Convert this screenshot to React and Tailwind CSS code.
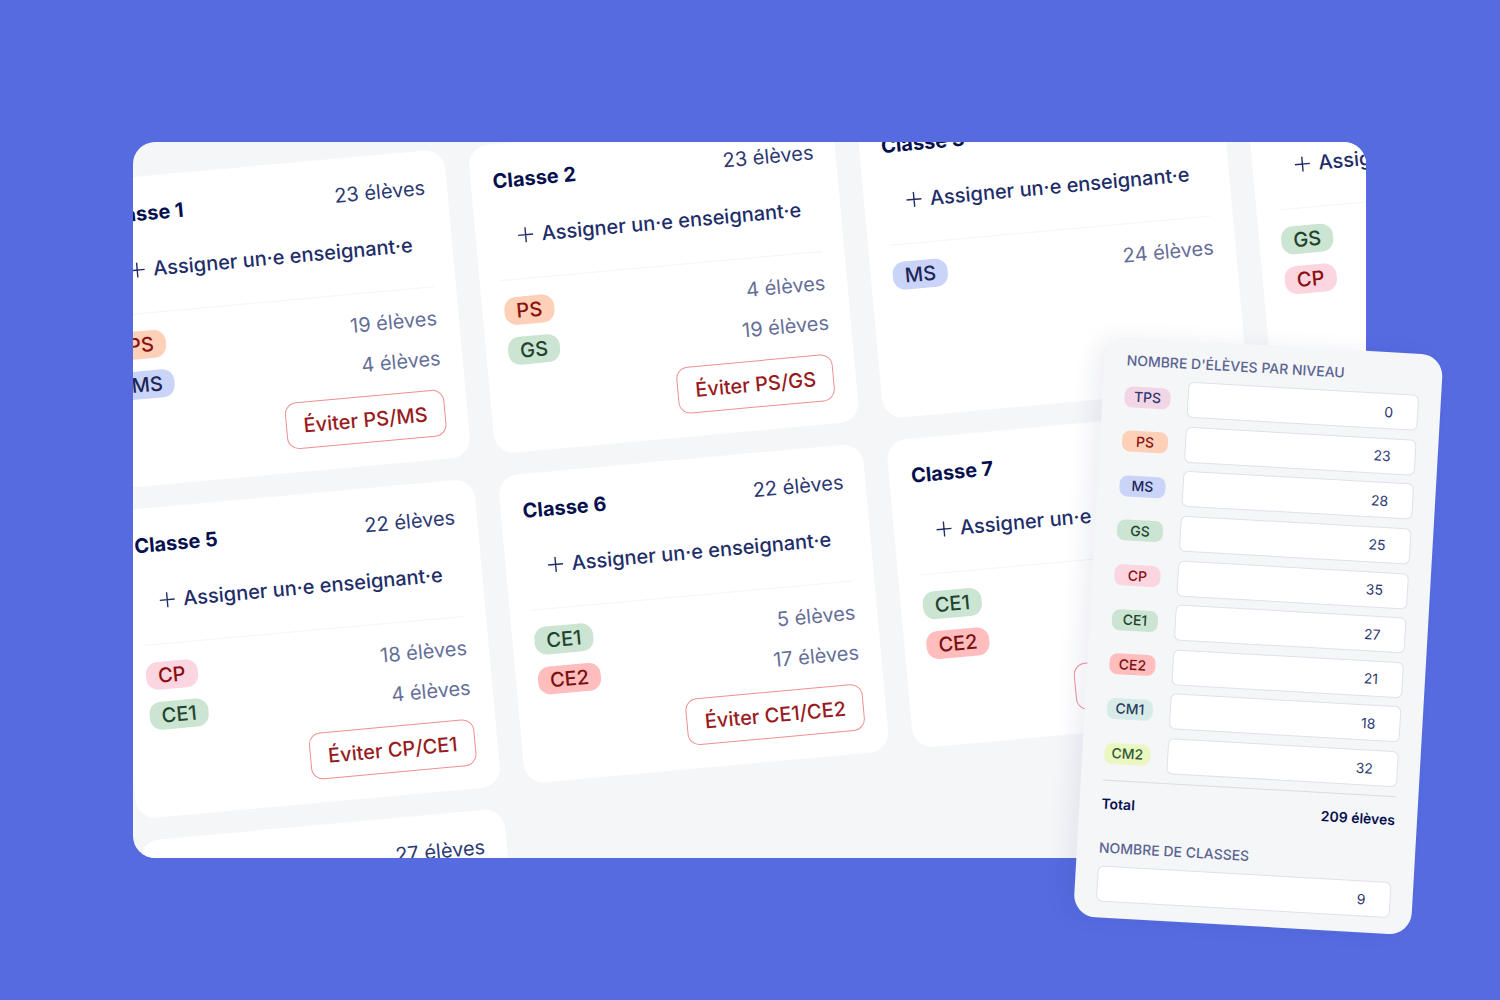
import React from "react";

const TAG_COLORS = {
  TPS: "bg-[#f3d6e6] text-[#2f3a72]",
  PS: "bg-[#ffd0b8] text-[#8b1010]",
  MS: "bg-[#cad4f9] text-[#1d2656]",
  GS: "bg-[#cbe5d2] text-[#22442f]",
  CP: "bg-[#fbd5e0] text-[#8b0d0d]",
  CE1: "bg-[#cbe5d2] text-[#22442f]",
  CE2: "bg-[#ffbdbd] text-[#7a0f0f]",
  CM1: "bg-[#d7ebe8] text-[#2b3d5c]",
  CM2: "bg-[#ebf7c0] text-[#2f5a3a]",
};

const CLASSES = [
  { id: 1, total: 23, levels: [["PS", 19], ["MS", 4]] },
  { id: 2, total: 23, levels: [["PS", 4], ["GS", 19]] },
  { id: 3, total: 24, levels: [["MS", 24]] },
  { id: 4, total: 23, levels: [["GS", 6], ["CP", 17]] },
  { id: 5, total: 22, levels: [["CP", 18], ["CE1", 4]] },
  { id: 6, total: 22, levels: [["CE1", 5], ["CE2", 17]] },
  { id: 7, total: 22, levels: [["CE1", 18], ["CE2", 4]] },
  { id: 8, total: 23, levels: [["CM1", 18], ["CM2", 5]] },
  { id: 9, total: 27, levels: [["CM2", 27]] },
];

const LEVELS = [
  ["TPS", 0],
  ["PS", 23],
  ["MS", 28],
  ["GS", 25],
  ["CP", 35],
  ["CE1", 27],
  ["CE2", 21],
  ["CM1", 18],
  ["CM2", 32],
];

function ClassCard({ id, total, levels }) {
  return (
    <article className="h-[309px] rounded-[20px] bg-white px-[22px] pt-[25px] text-[20px] leading-6">
      <header className="flex items-baseline justify-between">
        <h2 className="font-bold text-[#06104e]">Classe {id}</h2>
        <span className="text-[#2c3872]">{total} élèves</span>
      </header>
      <button
        type="button"
        className="mt-8 ml-5 flex items-center gap-2 whitespace-nowrap font-medium text-[#212d68]"
      >
        <svg className="size-4" viewBox="0 0 16 16" fill="none" stroke="currentColor" strokeWidth="1.4" aria-hidden="true">
          <path d="M8 .5v15M.5 8h15" />
        </svg>
        Assigner un·e enseignant·e
      </button>
      <hr className="mt-[31px] border-t border-[#f3f4f6]" />
      <ul className="mt-[17px] flex flex-col gap-3">
        {levels.map(([level, count]) => (
          <li key={level} className="flex h-7 items-center justify-between">
            <span className={`flex h-7 items-center rounded-[12px] px-3 font-medium ${TAG_COLORS[level]}`}>{level}</span>
            <span className="text-[#656e98]">{count} élèves</span>
          </li>
        ))}
      </ul>
      {levels.length > 1 && (
        <button
          type="button"
          className="mt-[17px] ml-auto flex h-[47px] items-center rounded-[12px] border border-[#ee8f93] px-[17px] font-medium text-[#981b1e]"
        >
          Éviter {levels.map(([level]) => level).join("/")}
        </button>
      )}
    </article>
  );
}

function CountInput({ id, value }) {
  return (
    <input
      id={id}
      type="text"
      inputMode="numeric"
      defaultValue={value}
      className="h-9 w-full min-w-0 rounded-[6px] border border-[#dfe1ea] bg-white pr-6 pl-3 text-right text-[14px] text-[#2c3872]"
    />
  );
}

export default function App() {
  return (
    <main className="relative min-h-screen overflow-hidden bg-[#556bdf] py-[142px] pr-[134px] pl-[133px] font-['Inter',sans-serif]">
      <section className="h-[716px] overflow-hidden rounded-[22px] bg-[#f4f6f8]">
        <div className="mt-10 -ml-[54px] grid w-max origin-top-left rotate-[-5.2deg] grid-cols-[repeat(4,366px)] gap-x-6 gap-y-[22px]">
          {CLASSES.map((item) => (
            <ClassCard key={item.id} {...item} />
          ))}
        </div>
      </section>

      <aside className="absolute top-[336px] right-14 w-[338px] origin-top-left rotate-[3.25deg] rounded-[22px] bg-[#f4f6f8] px-[22px] pt-[14px] pb-4 text-[14px] leading-[18px] shadow-[-12px_0_24px_-4px_rgba(25,35,110,0.08)]">
        <h2 className="font-medium text-[#5b6491]">NOMBRE D'ÉLÈVES PAR NIVEAU</h2>
        <div className="mt-[9px] flex h-[393px] flex-col justify-between">
          {LEVELS.map(([level, count]) => (
            <div key={level} className="flex items-center gap-[17px]">
              <label
                htmlFor={`level-${level}`}
                className={`flex h-[21px] w-[46px] shrink-0 items-center justify-center rounded-[8px] font-medium ${TAG_COLORS[level]}`}
              >
                {level}
              </label>
              <CountInput id={`level-${level}`} value={count} />
            </div>
          ))}
        </div>
        <div className="mt-[9px] flex justify-between border-t border-[#dadce6] pt-[14px] font-semibold text-[#06104e]">
          <span>Total</span>
          <span>209 élèves</span>
        </div>
        <label htmlFor="class-count" className="mt-[26px] block font-medium text-[#5b6491]">
          NOMBRE DE CLASSES
        </label>
        <div className="mt-[9px]">
          <CountInput id="class-count" value={9} />
        </div>
      </aside>
    </main>
  );
}
